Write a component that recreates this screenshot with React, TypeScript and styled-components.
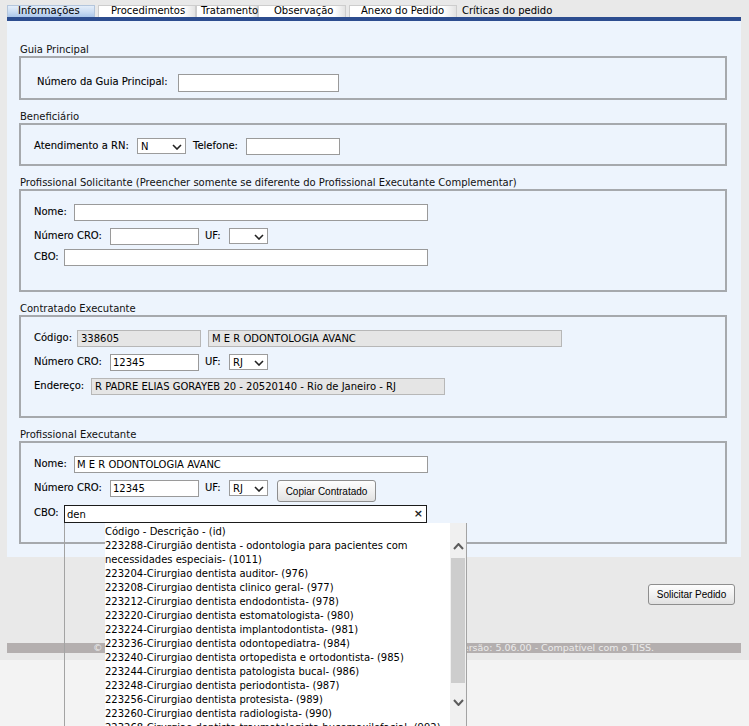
import React from "react";
import styled, { createGlobalStyle } from "styled-components";

const GlobalStyle = createGlobalStyle`
  html, body {
    margin: 0;
    padding: 0;
    overflow: hidden;
    background: #f3f3f3;
  }
  body {
    font-family: "DejaVu Sans", Verdana, sans-serif;
    font-size: 10px;
    color: #000;
  }
`;

const Page = styled.div`
  position: relative;
  width: 749px;
  height: 726px;
  overflow: hidden;
  background: #f3f3f3;
`;

const Shell = styled.div`
  background: #e9e9e9;
  padding: 0 8px 7px 7px;
`;

// tabs
const TabBar = styled.div`
  display: flex;
  align-items: flex-end;
  height: 17px;
`;

const Tab = styled.div<{ $w: number; $pl: number; $ml?: number; $active?: boolean; $plain?: boolean }>`
  box-sizing: border-box;
  width: ${(p) => p.$w}px;
  height: 12px;
  margin-left: ${(p) => p.$ml || 0}px;
  padding-left: ${(p) => p.$pl}px;
  line-height: 9px;
  font-size: 10px;
  color: #000;
  white-space: nowrap;
  border: 1px solid ${(p) => (p.$plain ? "transparent" : p.$active ? "#b4c6dc" : "#cdcdcd")};
  border-bottom: none;
  background: ${(p) =>
    p.$plain
      ? "transparent"
      : p.$active
      ? "linear-gradient(180deg, #e4eefa 0%, #c9dbf2 55%, #aac6ea 100%)"
      : "linear-gradient(90deg, #ffffff 0%, #ffffff 88%, #e3e3e3 100%)"};
`;

const Panel = styled.div`
  border-top: 4px solid #2d4d8f;
  background: #edf4fd;
  padding: 23px 0 13px 12px;
`;

const Legend = styled.div<{ $mt?: number }>`
  margin-top: ${(p) => p.$mt || 0}px;
  padding-left: 1px;
  line-height: 12px;
  color: #111;
  white-space: nowrap;
`;

const Box = styled.div<{ $h: number; $pad?: number }>`
  box-sizing: border-box;
  width: 708px;
  height: ${(p) => p.$h}px;
  border: 2px solid #a6a9ad;
  padding: ${(p) => p.$pad || 13}px 0 0 ${(p) => p.$pad || 13}px;
`;

const Row = styled.div<{ $mt?: number }>`
  display: flex;
  align-items: flex-start;
  margin-top: ${(p) => p.$mt || 0}px;
`;

const Label = styled.span<{ $w: number; $ml?: number }>`
  flex-shrink: 0;
  width: ${(p) => p.$w}px;
  margin-left: ${(p) => p.$ml || 0}px;
  line-height: 15px;
  color: #000;
  -webkit-text-stroke: 0.1px #000;
  white-space: nowrap;
`;

const TextInput = styled.input<{ $w: number; $h?: number; $ro?: boolean; $focus?: boolean }>`
  box-sizing: border-box;
  flex-shrink: 0;
  width: ${(p) => p.$w}px;
  height: ${(p) => p.$h || 17}px;
  margin: 0;
  padding: 0 ${(p) => (p.$ro ? 3 : 2)}px;
  border: 1px solid ${(p) => (p.$focus ? "#1b1b1b" : p.$ro ? "#b7b7b7" : "#9a9a9a")};
  border-radius: 0;
  background: ${(p) => (p.$ro ? "#e5e5e5" : "#fff")};
  font: 10px "DejaVu Sans", Verdana, sans-serif;
  color: #000;
  outline: none;
`;

const SelectBox = styled.div<{ $w: number; $ml?: number }>`
  box-sizing: border-box;
  flex-shrink: 0;
  display: flex;
  align-items: center;
  justify-content: space-between;
  width: ${(p) => p.$w}px;
  height: 16px;
  margin-left: ${(p) => p.$ml || 0}px;
  padding: 1px 3px 0 3px;
  border: 1px solid #9c9c9c;
  background: #fff;
  font-size: 10px;
`;

const Button = styled.button<{ $w: number; $h: number; $ml?: number }>`
  box-sizing: border-box;
  width: ${(p) => p.$w}px;
  height: ${(p) => p.$h}px;
  margin: 0 0 0 ${(p) => p.$ml || 0}px;
  padding: 0;
  font: 10px "Liberation Sans", Arial, sans-serif;
  color: #000;
  background: linear-gradient(180deg, #fdfdfd 0%, #f1f1f1 50%, #e1e1e1 100%);
  border: 1px solid #8e8e8e;
  border-radius: 3px;
`;

// autocomplete
const ComboWrap = styled.div`
  position: relative;
  width: 363px;
  height: 18px;
`;

const ClearMark = styled.span`
  position: absolute;
  right: 4px;
  top: 2px;
  font-size: 11px;
  font-weight: bold;
  line-height: 13px;
  color: #222;
`;

const Dropdown = styled.div`
  position: absolute;
  z-index: 10;
  top: 100%;
  left: 0;
  box-sizing: border-box;
  width: 403px;
  height: 230px;
  display: flex;
  padding-left: 40px;
  border: 1px solid #a3a3a3;
  border-top: none;
  background: transparent;
`;

const List = styled.ul`
  flex: 1;
  margin: 0;
  padding: 2px 0 0 0;
  list-style: none;
  background: #fff;
  overflow: hidden;
  line-height: 14px;
`;

const Item = styled.li`
  margin: 0;
  padding: 0;
  color: #000;
  white-space: nowrap;
`;

const WrapItem = styled(Item)`
  white-space: normal;
`;

const ScrollTrack = styled.div`
  width: 16px;
  background: #f0f0f0;
  display: flex;
  flex-direction: column;
  align-items: center;
`;

const ScrollArrow = styled.div<{ $mt: number }>`
  display: flex;
  align-items: center;
  justify-content: center;
  height: 17px;
  width: 16px;
  margin-top: ${(p) => p.$mt}px;
`;

const Thumb = styled.div`
  width: 14px;
  height: 125px;
  margin-top: 3px;
  background: #cdcdcd;
`;

const ActionBar = styled.div`
  display: flex;
  justify-content: flex-end;
  padding: 27px 6px 0 0;
`;

const FooterBar = styled.div`
  display: flex;
  justify-content: space-between;
  margin-top: 38px;
  height: 10px;
  padding: 0 87px 0 86px;
  background: #b4afaf;
  color: #ececec;
  font-size: 9.5px;
  line-height: 10px;
  white-space: nowrap;
`;

const Chevron = ({ up, color = "#222", w = 10, h = 6, sw = 1.6 }: { up?: boolean; color?: string; w?: number; h?: number; sw?: number }) => (
  <svg width={w} height={h} viewBox={`0 0 ${w} ${h}`}>
    <polyline
      points={up ? `1,${h - 1} ${w / 2},1 ${w - 1},${h - 1}` : `1,1 ${w / 2},${h - 1} ${w - 1},1`}
      fill="none"
      stroke={color}
      strokeWidth={sw}
    />
  </svg>
);

const tabs = [
  { label: "Informações", w: 88, pl: 10, ml: 0, active: true },
  { label: "Procedimentos", w: 98, pl: 12, ml: 3 },
  { label: "Tratamento", w: 62, pl: 4, ml: 0 },
  { label: "Observação", w: 88, pl: 15, ml: 0 },
  { label: "Anexo do Pedido", w: 108, pl: 11, ml: 3 },
  { label: "Críticas do pedido", w: 120, pl: 0, ml: 4, plain: true },
];

const cboOptions = [
  "223204-Cirurgiao dentista auditor- (976)",
  "223208-Cirurgiao dentista clinico geral- (977)",
  "223212-Cirurgiao dentista endodontista- (978)",
  "223220-Cirurgiao dentista estomatologista- (980)",
  "223224-Cirurgiao dentista implantodontista- (981)",
  "223236-Cirurgiao dentista odontopediatra- (984)",
  "223240-Cirurgiao dentista ortopedista e ortodontista- (985)",
  "223244-Cirurgiao dentista patologista bucal- (986)",
  "223248-Cirurgiao dentista periodontista- (987)",
  "223256-Cirurgiao dentista protesista- (989)",
  "223260-Cirurgiao dentista radiologista- (990)",
  "223268-Cirurgiao dentista traumatologista bucomaxilofacial- (992)",
];

const UfSelect = ({ value }: { value?: string }) => (
  <SelectBox $w={39}>
    <span>{value || ""}</span>
    <Chevron />
  </SelectBox>
);

export default function App() {
  return (
    <Page>
      <GlobalStyle />
      <Shell>
        <TabBar>
          {tabs.map((t) => (
            <Tab key={t.label} $w={t.w} $pl={t.pl} $ml={t.ml} $active={t.active} $plain={t.plain}>
              {t.label}
            </Tab>
          ))}
        </TabBar>

        <Panel>
          <Legend>Guia Principal</Legend>
          <Box $h={44} $pad={16}>
            <Row>
              <Label $w={141}>Número da Guia Principal:</Label>
              <TextInput $w={161} $h={18} defaultValue="" />
            </Row>
          </Box>

          <Legend $mt={11}>Beneficiário</Legend>
          <Box $h={43}>
            <Row>
              <Label $w={103}>Atendimento a RN:</Label>
              <SelectBox $w={49}>
                <span>N</span>
                <Chevron />
              </SelectBox>
              <Label $w={53} $ml={7}>Telefone:</Label>
              <TextInput $w={94} defaultValue="" />
            </Row>
          </Box>

          <Legend $mt={11}>
            Profissional Solicitante (Preencher somente se diferente do Profissional Executante Complementar)
          </Legend>
          <Box $h={103}>
            <Row>
              <Label $w={40}>Nome:</Label>
              <TextInput $w={354} defaultValue="" />
            </Row>
            <Row $mt={7}>
              <Label $w={76}>Número CRO:</Label>
              <TextInput $w={89} defaultValue="" />
              <Label $w={24} $ml={6}>UF:</Label>
              <UfSelect />
            </Row>
            <Row $mt={4}>
              <Label $w={30}>CBO:</Label>
              <TextInput $w={364} defaultValue="" />
            </Row>
          </Box>

          <Legend $mt={11}>Contratado Executante</Legend>
          <Box $h={103}>
            <Row>
              <Label $w={43}>Código:</Label>
              <TextInput $w={124} $ro readOnly value="338605" />
              <TextInput $w={354} $ro readOnly value="M E R ODONTOLOGIA AVANC" style={{ marginLeft: 7 }} />
            </Row>
            <Row $mt={7}>
              <Label $w={76}>Número CRO:</Label>
              <TextInput $w={89} defaultValue="12345" />
              <Label $w={24} $ml={6}>UF:</Label>
              <UfSelect value="RJ" />
            </Row>
            <Row $mt={7}>
              <Label $w={57}>Endereço:</Label>
              <TextInput $w={354} $ro readOnly value="R PADRE ELIAS GORAYEB 20 - 20520140 - Rio de Janeiro - RJ" />
            </Row>
          </Box>

          <Legend $mt={11}>Profissional Executante</Legend>
          <Box $h={103}>
            <Row>
              <Label $w={40}>Nome:</Label>
              <TextInput $w={354} defaultValue="M E R ODONTOLOGIA AVANC" />
            </Row>
            <Row $mt={7}>
              <Label $w={76}>Número CRO:</Label>
              <TextInput $w={89} defaultValue="12345" />
              <Label $w={24} $ml={6}>UF:</Label>
              <UfSelect value="RJ" />
              <Button $w={99} $h={22} $ml={9}>Copiar Contratado</Button>
            </Row>
            <Row $mt={3}>
              <Label $w={30}>CBO:</Label>
              <ComboWrap>
                <TextInput $w={363} $h={18} $focus defaultValue="den" />
                <ClearMark>×</ClearMark>
                <Dropdown>
                  <List>
                    <Item>Código - Descrição - (id)</Item>
                    <WrapItem>223288-Cirurgião dentista - odontologia para pacientes com necessidades especiais- (1011)</WrapItem>
                    {cboOptions.map((o) => (
                      <Item key={o}>{o}</Item>
                    ))}
                  </List>
                  <ScrollTrack>
                    <ScrollArrow $mt={15}>
                      <Chevron up color="#5c5c5c" w={11} h={7} sw={2} />
                    </ScrollArrow>
                    <Thumb />
                    <ScrollArrow $mt={11}>
                      <Chevron color="#5c5c5c" w={11} h={7} sw={2} />
                    </ScrollArrow>
                  </ScrollTrack>
                </Dropdown>
              </ComboWrap>
            </Row>
          </Box>
        </Panel>

        <ActionBar>
          <Button $w={87} $h={21}>Solicitar Pedido</Button>
        </ActionBar>

        <FooterBar>
          <span>©</span>
          <span>Versão: 5.06.00 - Compatível com o TISS.</span>
        </FooterBar>
      </Shell>
    </Page>
  );
}
